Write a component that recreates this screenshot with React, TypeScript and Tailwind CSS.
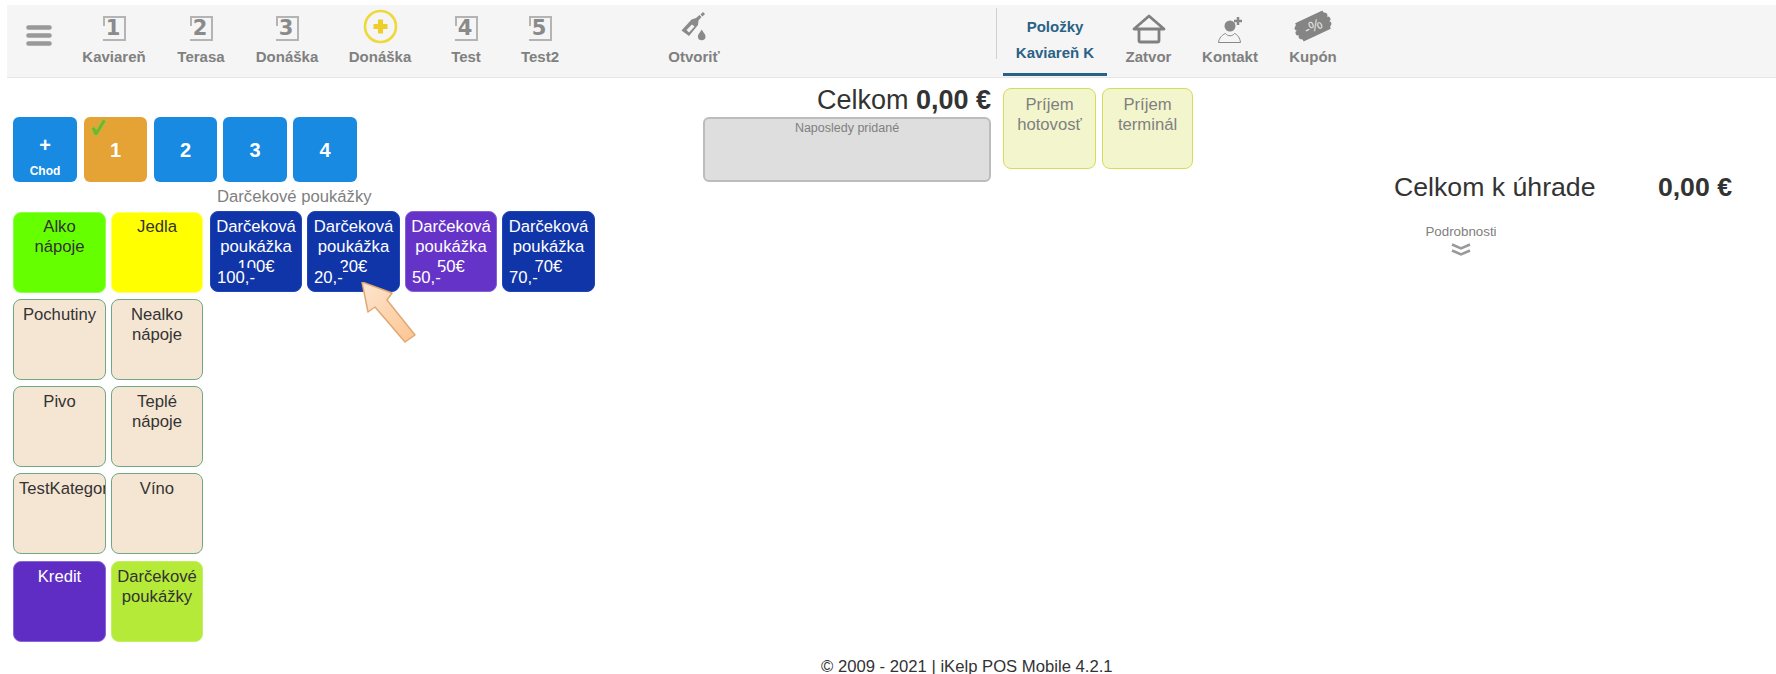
const TABLES = [
  { n: "1", label: "Kaviareň", w: "w-[86px]" },
  { n: "2", label: "Terasa", w: "w-[88px]" },
  { n: "3", label: "Donáška", w: "w-[84px]" },
  { n: "+", label: "Donáška", w: "w-[102px]" },
  { n: "4", label: "Test", w: "w-[70px]" },
  { n: "5", label: "Test2", w: "w-[78px]" },
];

const BEIGE = "bg-[#f5e6d3] border-[#6fa883] text-[#333333] pt-[5px]";

const CATEGORIES = [
  { name: "Alko nápoje", cls: "bg-[#66ff00] border-[#8dff4d] text-[#333333] pt-[4px]" },
  { name: "Jedla", cls: "bg-[#ffff00] border-[#ffff66] text-[#333333] pt-[4px]" },
  { name: "Pochutiny", cls: BEIGE },
  { name: "Nealko nápoje", cls: BEIGE },
  { name: "Pivo", cls: BEIGE },
  { name: "Teplé nápoje", cls: BEIGE },
  { name: "TestKategorie", cls: BEIGE },
  { name: "Víno", cls: BEIGE },
  { name: "Kredit", cls: "mt-px bg-[#5f2dc4] border-[#8a66d6] text-white pt-[5px]" },
  { name: "Darčekové poukážky", cls: "mt-px bg-[#b5ea38] border-[#c4ef60] text-[#333333] pt-[5px]" },
];

const VOUCHERS = [
  { name: "Darčeková poukážka 100€", price: "100,-", w: "w-[92px]", bg: "bg-[#1035a8]", border: "border-[#1f46b8]" },
  { name: "Darčeková poukážka 20€", price: "20,-", w: "w-[93px]", bg: "bg-[#1035a8]", border: "border-[#1f46b8]" },
  { name: "Darčeková poukážka 50€", price: "50,-", w: "w-[92px]", bg: "bg-[#6633c9]", border: "border-[#8560d6]" },
  { name: "Darčeková poukážka 70€", price: "70,-", w: "w-[93px]", bg: "bg-[#1035a8]", border: "border-[#1f46b8]" },
];

function NumberIcon({ n }: { n: string }) {
  return (
    <div className="relative mt-[11px] flex h-[25px] w-[23px] items-center justify-center border-t-2 border-r-2 border-b-2 border-[#b4b4b4] font-['DejaVu_Sans',sans-serif] text-[21px] leading-none font-bold text-[#8a8a8a]">
      <span className="absolute top-0 left-0 h-[8px] w-[2px] bg-[#b4b4b4]" />
      {n}
    </div>
  );
}

function PlusCircleIcon() {
  return (
    <svg width="40" height="43" viewBox="0 0 40 43">
      <circle cx="20.5" cy="21.5" r="15.5" fill="none" stroke="#efd83a" strokeWidth="2.6" />
      <path d="M20.5 14.5v14M13.5 21.5h14" stroke="#f0ce2a" strokeWidth="5" />
    </svg>
  );
}

function BottleIcon() {
  return (
    <svg width="40" height="43" viewBox="0 0 40 43">
      <path d="M7.5 25.5 17.5 14.5 22 13 25.5 10 27.5 12 24.5 15.5 24 20 15 31z" fill="#8a8a8a" />
      <path d="M12.5 25 18 19.5 20.5 21.5 15 27.5z" fill="#f5f5f5" />
      <path d="M26.5 9.5 29 7 31 9 28.5 11.5z" fill="#8a8a8a" />
      <path d="M27.7 24.5c1.5 2.7 3.8 4.8 3.8 7a3.8 3.8 0 0 1-7.6 0c0-2.2 2.3-4.3 3.8-7z" fill="#8a8a8a" />
    </svg>
  );
}

function HouseIcon() {
  return (
    <svg width="40" height="43" viewBox="0 0 40 43">
      <path d="M5 24 20 11l15 13z" fill="none" stroke="#808080" strokeWidth="2.8" strokeLinejoin="round" />
      <path d="M10 24v11.5q0 1.5 1.5 1.5h17q1.5 0 1.5-1.5V24" fill="none" stroke="#808080" strokeWidth="2.8" />
    </svg>
  );
}

function ContactIcon() {
  return (
    <svg width="40" height="43" viewBox="0 0 40 43">
      <circle cx="20" cy="21" r="5.5" fill="#888888" />
      <path d="M8.5 37.5C9 33 12.5 29.5 15.5 28.5c2 3 7 3 9 0 3 1 5.5 4.5 6 9z" fill="none" stroke="#888888" />
      <path d="M28 12v8M24 16h8" stroke="#888888" strokeWidth="2.5" />
    </svg>
  );
}

function CouponIcon() {
  return (
    <svg width="44" height="43" viewBox="0 0 44 43">
      <g transform="rotate(-25 22 21)">
        <path
          d="M7 11h30a2.5 2.5 0 0 0 1.5 3 2.5 2.5 0 0 1 0 4.5 2.5 2.5 0 0 1 0 5 2.5 2.5 0 0 1 0 4.5 2.5 2.5 0 0 0-1.5 3H7a2.5 2.5 0 0 0-1.5-3 2.5 2.5 0 0 1 0-4.5 2.5 2.5 0 0 1 0-5 2.5 2.5 0 0 1 0-4.5A2.5 2.5 0 0 0 7 11z"
          fill="#858585"
        />
        <text x="22" y="26.5" textAnchor="middle" fontSize="15" fontFamily="Liberation Sans" fill="#e4e4e4">
          -%
        </text>
      </g>
    </svg>
  );
}

function NavItem({ label, w, children }: { label: string; w: string; children: React.ReactNode }) {
  return (
    <div className={`flex ${w} flex-col items-center`}>
      <div className="flex h-[43px] justify-center">{children}</div>
      <div className="text-[15px] leading-[18px] font-bold whitespace-nowrap text-[#808080]">{label}</div>
    </div>
  );
}

function Header() {
  return (
    <header className="mt-[5px] ml-[7px] flex h-[73px] border-b border-[#e6e6e6] bg-[#f5f5f5]">
      <div className="w-[64px] pt-[20px] pl-[19px]">
        <svg width="26" height="21" viewBox="0 0 26 21">
          <path d="M2.5 2.5h21M2.5 10.5h21M2.5 18.5h21" stroke="#999999" strokeWidth="4.6" strokeLinecap="round" />
        </svg>
      </div>
      {TABLES.map((t, i) => (
        <NavItem key={i} label={t.label} w={t.w}>
          {t.n === "+" ? <PlusCircleIcon /> : <NumberIcon n={t.n} />}
        </NavItem>
      ))}
      <div className="ml-[85px]">
        <NavItem label="Otvoriť" w="w-[60px]">
          <BottleIcon />
        </NavItem>
      </div>
      <div className="mt-[3px] ml-[272px] h-[51px] w-px bg-[#cfcfcf]" />
      <div className="ml-[6px] flex h-[71px] w-[104px] flex-col items-center border-b-[3px] border-[#2a6186] text-[15px] leading-[18px] font-bold whitespace-nowrap text-[#2a6186]">
        <div className="mt-[13px]">Položky</div>
        <div className="mt-[8px]">Kaviareň K</div>
      </div>
      <NavItem label="Zatvor" w="w-[83px]">
        <HouseIcon />
      </NavItem>
      <NavItem label="Kontakt" w="w-[80px]">
        <ContactIcon />
      </NavItem>
      <NavItem label="Kupón" w="w-[86px]">
        <CouponIcon />
      </NavItem>
    </header>
  );
}

function CourseButtons() {
  return (
    <div className="flex gap-[6px] font-bold text-white">
      <div className="flex h-[65px] w-[64px] flex-col items-center rounded-[6px] bg-[#188ae2]">
        <div className="mt-[17px] text-[20px] leading-[22px]">+</div>
        <div className="mt-[8px] text-[12px] leading-[14px]">Chod</div>
      </div>
      <div className="relative ml-px flex h-[65px] w-[63px] items-center justify-center rounded-[6px] bg-[#e5a335] text-[20px]">
        <svg className="absolute top-[2px] left-[6px]" width="17" height="18" viewBox="0 0 17 18">
          <path d="M1 9.5 4 7.5 6.5 10.5 12.5 0.5 16.5 1.5 7.5 16.5H4.5z" fill="#78b52d" stroke="#a5d45a" strokeWidth="0.5" />
        </svg>
        1
      </div>
      <div className="ml-px flex h-[65px] w-[63px] items-center justify-center rounded-[6px] bg-[#188ae2] text-[20px]">2</div>
      {["3", "4"].map((n) => (
        <div key={n} className="flex h-[65px] w-[64px] items-center justify-center rounded-[6px] bg-[#188ae2] text-[20px]">
          {n}
        </div>
      ))}
    </div>
  );
}

function Categories() {
  return (
    <div className="grid w-[190px] grid-cols-[93px_92px] gap-x-[5px] gap-y-[6px]">
      {CATEGORIES.map((c) => (
        <div
          key={c.name}
          className={`h-[81px] overflow-hidden rounded-[8px] border px-[5px] text-center text-[16.67px] leading-[20px] ${c.cls}`}
        >
          {c.name}
        </div>
      ))}
    </div>
  );
}

function Vouchers() {
  return (
    <div className="relative -mt-px ml-[7px] flex items-start gap-[5px] self-start">
      {VOUCHERS.map((v) => (
        <div
          key={v.price}
          className={`relative h-[81px] overflow-hidden rounded-[8px] border px-[4px] pt-[5px] text-center text-[16.67px] leading-[20px] text-white ${v.w} ${v.bg} ${v.border}`}
        >
          {v.name}
          <div className={`absolute top-[56px] left-0 pl-[6px] ${v.bg}`}>{v.price}</div>
        </div>
      ))}
      {/* pointer arrow drawn over the 20€ voucher */}
      <svg className="absolute top-[71px] left-[150px]" width="60" height="66" viewBox="0 0 60 66">
        <defs>
          <linearGradient id="arrow" x1="0" y1="0" x2="1" y2="1">
            <stop offset="0" stopColor="#fde6d0" />
            <stop offset="1" stopColor="#fcc490" />
          </linearGradient>
        </defs>
        <path d="M2 0 32 11 27 18 55 53 45 60 15 25 8 30z" fill="url(#arrow)" stroke="#e2a873" strokeWidth="1.5" strokeLinejoin="round" />
      </svg>
    </div>
  );
}

function Middle() {
  return (
    <div className="flex">
      <div className="w-[288px] pt-[6px]">
        <div className="text-right text-[27px] leading-[32px] text-[#333333]">
          Celkom <b>0,00 €</b>
        </div>
        <div className="mt-px h-[65px] rounded-[6px] border-2 border-[#bcbcbc] bg-[#dedede] pt-px text-center text-[12.5px] leading-[16px] text-[#808080]">
          Naposledy pridané
        </div>
      </div>
      <div className="mt-[10px] ml-[12px] flex gap-[6px] text-center text-[16.67px] leading-[20px] text-[#808080]">
        <div className="h-[81px] w-[93px] rounded-[8px] border border-[#d8dc5b] bg-[#f3f5cd] pt-[6px]">
          Príjem
          <br />
          hotovosť
        </div>
        <div className="h-[81px] w-[91px] rounded-[8px] border border-[#d8dc5b] bg-[#f3f5cd] pt-[6px]">
          Príjem
          <br />
          terminál
        </div>
      </div>
    </div>
  );
}

function Summary() {
  return (
    <div className="ml-[201px] w-[338px] pt-[93px]">
      <div className="flex justify-between text-[26.67px] leading-[32px] text-[#333333]">
        <span>Celkom k úhrade</span>
        <b>0,00 €</b>
      </div>
      <div className="mt-[22px] flex w-[134px] flex-col items-center text-[13.33px] leading-[14px] text-[#808080]">
        Podrobnosti
        <svg className="mt-[4px]" width="20" height="13" viewBox="0 0 20 13">
          <path d="M1 1.5l9 4 9-4M1 7.5l9 4 9-4" fill="none" stroke="#999999" strokeWidth="2.5" />
        </svg>
      </div>
    </div>
  );
}

export default function App() {
  return (
    <div className="h-[674px] overflow-hidden bg-white font-['Liberation_Sans',Arial,sans-serif]">
      <Header />
      <main className="flex h-[580px]">
        <div className="ml-[13px] w-[690px] pt-[39px]">
          <CourseButtons />
          <div className="mt-[5px] ml-[204px] text-[16.67px] leading-[20px] text-[#808080]">Darčekové poukážky</div>
          <div className="mt-[5px] flex">
            <Categories />
            <Vouchers />
          </div>
        </div>
        <Middle />
        <Summary />
      </main>
      <footer className="pl-[821px] text-[16.67px] leading-[18px] text-[#333333]">© 2009 - 2021 | iKelp POS Mobile 4.2.1</footer>
    </div>
  );
}
